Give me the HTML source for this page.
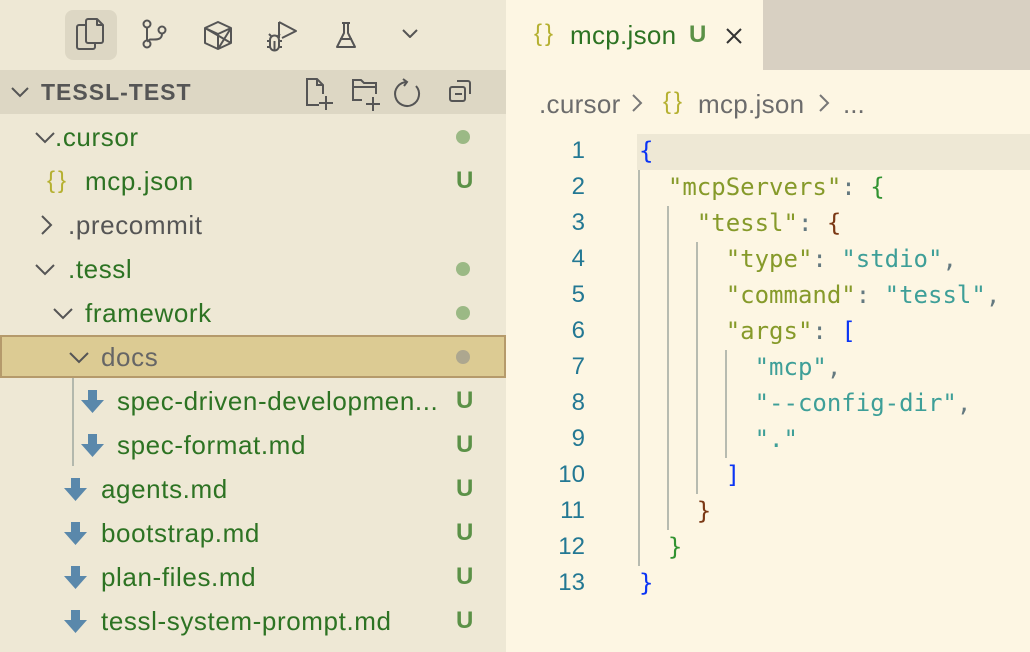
<!DOCTYPE html>
<html><head><style>
*{margin:0;padding:0;box-sizing:border-box}
body{width:1030px;height:652px;overflow:hidden;background:#fdf6e3;position:relative;font-family:"Liberation Sans",sans-serif}
.side{position:absolute;left:0;top:0;width:506px;height:652px;background:#eee8d5}
.a{position:absolute}
.row{position:absolute;left:0;width:506px;height:44px;line-height:44px;font-size:26px;letter-spacing:0.6px;color:#2d7323}
.row span{position:absolute}
.dot{position:absolute;left:456px;top:15px;width:14px;height:14px;border-radius:50%;background:#9bb985}
.U{position:absolute;left:456px;font-size:24px;color:#5b9147;font-weight:bold;letter-spacing:0}
.chv{position:absolute;top:0}
.md{position:absolute;top:11px}
.code{position:absolute;font-family:"DejaVu Sans Mono",monospace;font-size:24px;white-space:pre;line-height:36px;height:36px}
.ln{position:absolute;width:50px;text-align:right;left:535px;font-size:24px;color:#237893;line-height:36px}
.k{color:#869a2a}.s{color:#3e9f98}.p{color:#647980}.b1{color:#0a34f5}.b2{color:#319331}.b3{color:#7b3814}
.g{position:absolute;width:2px;background:#b3b8ad}
.br{position:absolute;font-size:24px;color:#b5b030;letter-spacing:3px}
</style></head><body>
<div class="side">
 <div class="a" style="left:65px;top:10px;width:52px;height:50px;border-radius:8px;background:#ddd7c4"></div>
 <svg class="a" style="left:0;top:0" width="506" height="70" fill="none" stroke="#555" stroke-width="2" stroke-linejoin="round">
  <path d="M86 25h-7a2 2 0 0 0-2 2v20a2 2 0 0 0 2 2h14a2 2 0 0 0 2-2v-4"/>
  <path d="M88 19h9l6 6v16a2 2 0 0 1-2 2H88a2 2 0 0 1-2-2V21a2 2 0 0 1 2-2z M97 19v6h6"/>
  <circle cx="147" cy="24" r="3.5"/><circle cx="147" cy="44" r="3.5"/><circle cx="162" cy="30" r="3.5"/><path d="M147 28v12.5 M162 33.5c0 5-3 6-8 6h-4l-3 2"/>
  <path d="M218 22l13 6v15l-13 6-13-6V28z M205 28l13 6 13-6 M218 34v15 M218 49l13-21 M205 28l26 15"/>
  <path d="M279 22v16 M279 22l17 9-14 7"/>
  <path d="M270 40a4.5 4.5 0 0 1 9 0v6a4.5 4.5 0 0 1-9 0z M267 41h3 M279 41h3 M267 47h3 M279 47h3 M274.5 41v9 M271 36l-2-2 M278 36l2-2"/>
  <path d="M342 23h8 M344 23v10l-7 14h18l-7-14V23 M340 39h12"/>
  <path d="M403 30l7 7 7-7"/>
 </svg>
 <div class="a" style="left:0;top:70px;width:506px;height:44px;background:#ddd7c4"></div>
 <svg class="a" style="left:10px;top:85px" width="20" height="14" fill="none" stroke="#555" stroke-width="2"><path d="M2 3l8 8 8-8"/></svg>
 <div class="a" style="left:41px;top:70px;line-height:44px;font-size:23px;font-weight:bold;color:#555;letter-spacing:1px">TESSL-TEST</div>
 <svg class="a" style="left:300px;top:70px" width="200" height="44" fill="none" stroke="#555" stroke-width="2">
  <path d="M19 35H7V9h10l6 6v9 M17 9v6h6 M26 26v14 M19 33h14"/>
  <path d="M62 30H53V10h8l3 3h12v11 M53 17h23 M66 34h14 M73 27v14"/>
  <path d="M107 12a12 12 0 1 0 9 4 M103 9l4 3-3 4"/>
  <path d="M157 11h11a2 2 0 0 1 2 2v11 M152 17h11a2 2 0 0 1 2 2v10a2 2 0 0 1-2 2h-11a2 2 0 0 1-2-2V19a2 2 0 0 1 2-2z M155 24h7"/>
 </svg>
 <div class="row" style="top:115px"><svg class="chv" style="left:34px" width="22" height="44" fill="none" stroke="#555" stroke-width="2"><path d="M2 18l9 9 9-9"/></svg><span style="left:55px">.cursor</span><div class="dot"></div></div>
 <div class="row" style="top:159px"><span class="br" style="left:47px">{}</span><span style="left:85px">mcp.json</span><span class="U">U</span></div>
 <div class="row" style="top:203px;color:#555"><svg class="chv" style="left:38px" width="22" height="44" fill="none" stroke="#555" stroke-width="2"><path d="M4 13l9 9-9 9"/></svg><span style="left:68px">.precommit</span></div>
 <div class="row" style="top:247px"><svg class="chv" style="left:34px" width="22" height="44" fill="none" stroke="#555" stroke-width="2"><path d="M2 18l9 9 9-9"/></svg><span style="left:68px">.tessl</span><div class="dot"></div></div>
 <div class="row" style="top:291px"><svg class="chv" style="left:52px" width="22" height="44" fill="none" stroke="#555" stroke-width="2"><path d="M2 18l9 9 9-9"/></svg><span style="left:85px">framework</span><div class="dot"></div></div>
 <div class="row" style="top:335px;height:43px;background:#dccb93;border:2px solid #b59a6b;color:#666"><svg class="chv" style="left:66px;top:-2px" width="22" height="44" fill="none" stroke="#555" stroke-width="2"><path d="M2 18l9 9 9-9"/></svg><span style="left:99px;top:-2px">docs</span><div class="dot" style="background:#ada78f;top:13px;left:454px"></div></div>
 <div class="g" style="left:72px;top:378px;height:88px"></div>
 <div class="row" style="top:379px"><svg class="md" style="left:81px" width="24" height="24"><path d="M7 0h9v10h7L11.5 23 0 10h7z" fill="#5a88ab"/></svg><span style="left:117px">spec-driven-developmen...</span><span class="U">U</span></div>
 <div class="row" style="top:423px"><svg class="md" style="left:81px" width="24" height="24"><path d="M7 0h9v10h7L11.5 23 0 10h7z" fill="#5a88ab"/></svg><span style="left:117px">spec-format.md</span><span class="U">U</span></div>
 <div class="row" style="top:467px"><svg class="md" style="left:64px" width="24" height="24"><path d="M7 0h9v10h7L11.5 23 0 10h7z" fill="#5a88ab"/></svg><span style="left:101px">agents.md</span><span class="U">U</span></div>
 <div class="row" style="top:511px"><svg class="md" style="left:64px" width="24" height="24"><path d="M7 0h9v10h7L11.5 23 0 10h7z" fill="#5a88ab"/></svg><span style="left:101px">bootstrap.md</span><span class="U">U</span></div>
 <div class="row" style="top:555px"><svg class="md" style="left:64px" width="24" height="24"><path d="M7 0h9v10h7L11.5 23 0 10h7z" fill="#5a88ab"/></svg><span style="left:101px">plan-files.md</span><span class="U">U</span></div>
 <div class="row" style="top:599px"><svg class="md" style="left:64px" width="24" height="24"><path d="M7 0h9v10h7L11.5 23 0 10h7z" fill="#5a88ab"/></svg><span style="left:101px">tessl-system-prompt.md</span><span class="U">U</span></div>
</div>
<div class="a" style="left:763px;top:0;width:267px;height:70px;background:#d8d0c2"></div>
<div class="br" style="left:534px;top:20px">{}</div>
<div class="a" style="left:570px;top:20px;font-size:26px;letter-spacing:0.3px;color:#2d7323">mcp.json</div>
<div class="a" style="left:689px;top:21px;font-size:24px;color:#5b9147;font-weight:bold">U</div>
<svg class="a" style="left:724px;top:26px" width="20" height="20" stroke="#333" stroke-width="2"><path d="M3 3l14 14M17 3L3 17"/></svg>
<div class="a" style="left:539px;top:89px;font-size:26px;color:#6c6c6c;letter-spacing:0.3px">.cursor</div>
<svg class="a" style="left:630px;top:92px" width="14" height="24" fill="none" stroke="#777" stroke-width="2"><path d="M3 3l8 8-8 8"/></svg>
<div class="br" style="left:663px;top:88px">{}</div>
<div class="a" style="left:698px;top:89px;font-size:26px;color:#6c6c6c;letter-spacing:0.3px">mcp.json</div>
<svg class="a" style="left:817px;top:92px" width="14" height="24" fill="none" stroke="#777" stroke-width="2"><path d="M3 3l8 8-8 8"/></svg>
<div class="a" style="left:843px;top:89px;font-size:26px;color:#6c6c6c">...</div>
<div class="a" style="left:637px;top:134px;width:393px;height:36px;background:#eee8d5"></div>
<div class="g" style="left:638px;top:170px;height:396px;background:#b7bbb0"></div>
<div class="g" style="left:667px;top:206px;height:324px;background:#b7bbb0"></div>
<div class="g" style="left:696px;top:242px;height:252px;background:#b7bbb0"></div>
<div class="g" style="left:725px;top:350px;height:108px;background:#b7bbb0"></div>
<div class="ln" style="top:133px">1</div><div class="ln" style="top:169px">2</div><div class="ln" style="top:205px">3</div><div class="ln" style="top:241px">4</div><div class="ln" style="top:277px">5</div><div class="ln" style="top:313px">6</div><div class="ln" style="top:349px">7</div><div class="ln" style="top:385px">8</div><div class="ln" style="top:421px">9</div><div class="ln" style="top:457px">10</div><div class="ln" style="top:493px">11</div><div class="ln" style="top:529px">12</div><div class="ln" style="top:565px">13</div>
<div class="code" style="left:639px;top:133px"><span class="b1">{</span></div>
<div class="code" style="left:639px;top:169px">  <span class="k">"mcpServers"</span><span class="p">:</span> <span class="b2">{</span></div>
<div class="code" style="left:639px;top:205px">    <span class="k">"tessl"</span><span class="p">:</span> <span class="b3">{</span></div>
<div class="code" style="left:639px;top:241px">      <span class="k">"type"</span><span class="p">:</span> <span class="s">"stdio"</span><span class="p">,</span></div>
<div class="code" style="left:639px;top:277px">      <span class="k">"command"</span><span class="p">:</span> <span class="s">"tessl"</span><span class="p">,</span></div>
<div class="code" style="left:639px;top:313px">      <span class="k">"args"</span><span class="p">:</span> <span class="b1">[</span></div>
<div class="code" style="left:639px;top:349px">        <span class="s">"mcp"</span><span class="p">,</span></div>
<div class="code" style="left:639px;top:385px">        <span class="s">"--config-dir"</span><span class="p">,</span></div>
<div class="code" style="left:639px;top:421px">        <span class="s">"."</span></div>
<div class="code" style="left:639px;top:457px">      <span class="b1">]</span></div>
<div class="code" style="left:639px;top:493px">    <span class="b3">}</span></div>
<div class="code" style="left:639px;top:529px">  <span class="b2">}</span></div>
<div class="code" style="left:639px;top:565px"><span class="b1">}</span></div>
</body></html>
